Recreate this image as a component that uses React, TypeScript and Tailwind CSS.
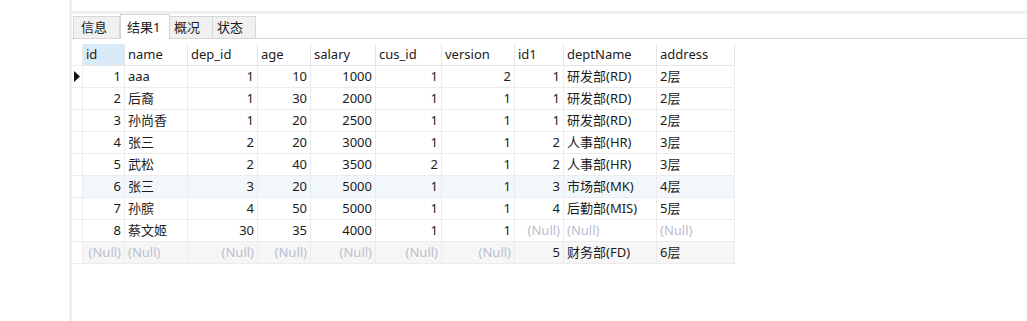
import React from "react";

type Col = { key: string; width: string; align: "left" | "right" };

const columns: Col[] = [
  { key: "id", width: "w-[42px]", align: "right" },
  { key: "name", width: "w-[63px]", align: "left" },
  { key: "dep_id", width: "w-[70px]", align: "right" },
  { key: "age", width: "w-[53px]", align: "right" },
  { key: "salary", width: "w-[65px]", align: "right" },
  { key: "cus_id", width: "w-[66px]", align: "right" },
  { key: "version", width: "w-[73px]", align: "right" },
  { key: "id1", width: "w-[49px]", align: "right" },
  { key: "deptName", width: "w-[93px]", align: "left" },
  { key: "address", width: "w-[78px]", align: "left" },
];

const N = null;

const rows: (string | number | null)[][] = [
  [1, "aaa", 1, 10, 1000, 1, 2, 1, "研发部(RD)", "2层"],
  [2, "后裔", 1, 30, 2000, 1, 1, 1, "研发部(RD)", "2层"],
  [3, "孙尚香", 1, 20, 2500, 1, 1, 1, "研发部(RD)", "2层"],
  [4, "张三", 2, 20, 3000, 1, 1, 2, "人事部(HR)", "3层"],
  [5, "武松", 2, 40, 3500, 2, 1, 2, "人事部(HR)", "3层"],
  [6, "张三", 3, 20, 5000, 1, 1, 3, "市场部(MK)", "4层"],
  [7, "孙膑", 4, 50, 5000, 1, 1, 4, "后勤部(MIS)", "5层"],
  [8, "蔡文姬", 30, 35, 4000, 1, 1, N, N, N],
  [N, N, N, N, N, N, N, 5, "财务部(FD)", "6层"],
];

const tabs = ["信息", "结果1", "概况", "状态"];

export default function App() {
  return (
    <div
      className="flex h-[321px] w-[1027px] overflow-hidden bg-white text-[13px] text-[#1b1b1b]"
      style={{ fontFamily: '"Noto Sans", "Noto Sans CJK SC", sans-serif' }}
    >
      <div className="w-[69px] shrink-0" />
      <div className="w-[3px] shrink-0 bg-[#efefef]" />
      <div className="flex min-w-0 flex-1 flex-col">
        <div className="h-[11px]" />
        <div className="h-[3px] bg-[#efefef]" />
        <div className="flex h-[25px] items-end border-b border-[#d6d6d6] pl-px">
          {tabs.map((t, i) => (
            <div
              key={t}
              className={
                i === 1
                  ? "-mb-px flex h-[25px] w-[50px] items-center border-x border-t border-[#d6d6d6] bg-white pl-[6px] leading-none"
                  : i === 0
                  ? "flex h-[22px] w-[47px] items-center border border-b-0 border-[#d6d6d6] bg-[#f0f0f0] pl-[7px] leading-none"
                  : "flex h-[22px] w-[43px] items-center border-r border-t border-[#d6d6d6] bg-[#f0f0f0] pl-[4px] leading-none"
              }
            >
              {t}
            </div>
          ))}
        </div>
        <div className="mt-[5px] flex flex-col">
          <div className="flex h-[22px]">
            <div className="w-[11px] shrink-0 border-r border-b border-[#ececec]" />
            {columns.map((c, i) => (
              <div
                key={c.key}
                className={`${c.width} flex shrink-0 items-center border-r border-b border-[#e6e6e6] px-[3px] leading-none ${
                  i === 0 ? "bg-[#d9eaf8]" : "bg-white"
                }`}
              >
                {c.key}
              </div>
            ))}
          </div>
          {rows.map((r, ri) => {
            const bg = ri === 8 ? "bg-[#f6f6f6]" : ri === 5 ? "bg-[#f2f7fc]" : "bg-white";
            return (
              <div key={ri} className="flex h-[22px]">
                <div className="relative w-[11px] shrink-0 border-r border-b border-[#ececec] bg-white">
                  {ri === 0 && (
                    <svg className="absolute left-[2px] top-[5px]" width="6" height="11" viewBox="0 0 6 11">
                      <path d="M0 0 L6 5.5 L0 11 Z" fill="#111" />
                    </svg>
                  )}
                </div>
                {columns.map((c, ci) => {
                  const v = r[ci];
                  return (
                    <div
                      key={c.key}
                      className={`${c.width} ${bg} flex shrink-0 items-center whitespace-nowrap border-r border-b border-[#ececec] px-[3px] leading-none ${
                        c.align === "right" ? "justify-end" : "justify-start"
                      }`}
                    >
                      {v === null ? <span className="text-[#b9bdd0]">(Null)</span> : v}
                    </div>
                  );
                })}
              </div>
            );
          })}
        </div>
      </div>
    </div>
  );
}
